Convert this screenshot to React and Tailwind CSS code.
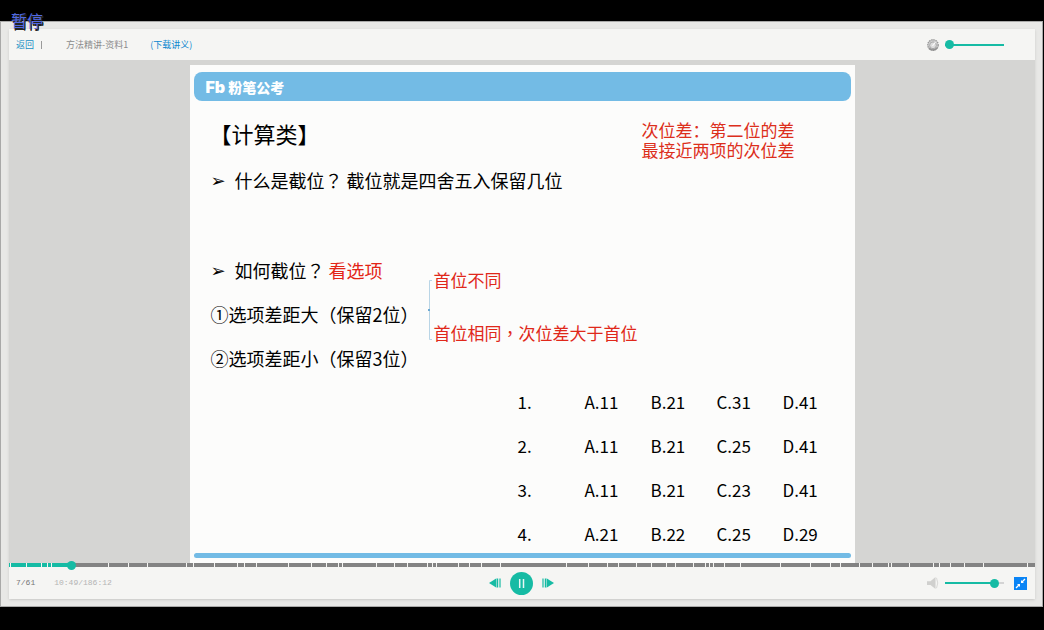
import React from "react";

const BAR_START = 9;
const BAR_END = 1035;
const PLAYED_TO = 72;
const MARKS = [
  11, 27, 42, 48, 52, 72, 109, 129, 148, 187, 194, 215, 238, 245, 257, 289, 312,
  327, 339, 343, 377, 395, 408, 428, 433, 437, 459, 470, 482, 501, 567, 588,
  607, 618, 636, 651, 666, 675, 693, 705, 709, 713, 724, 740, 780, 810, 830,
  840, 859, 872, 888, 891, 909, 933, 939, 950, 964, 983, 1027,
];

const QUESTIONS = [
  ["1.", "A.11", "B.21", "C.31", "D.41"],
  ["2.", "A.11", "B.21", "C.25", "D.41"],
  ["3.", "A.11", "B.21", "C.23", "D.41"],
  ["4.", "A.21", "B.22", "C.25", "D.29"],
];

const THUMB =
  "appearance-none rounded-none outline-none [&::-webkit-slider-thumb]:appearance-none [&::-webkit-slider-thumb]:h-[9px] [&::-webkit-slider-thumb]:w-[9px] [&::-webkit-slider-thumb]:rounded-full [&::-webkit-slider-thumb]:bg-[#16bba4]";

function Header() {
  return (
    <header className="flex h-[31px] items-center bg-[#f5f5f3] pr-[31px] pl-[7px] text-[9px] leading-4">
      <a href="#back" className="text-[#1a8fc4]">
        返回
      </a>
      <span className="ml-[7px] h-2 w-px bg-[#9a9a9a]" />
      <h1 className="ml-6 text-[#8c8c8c]">方法精讲-资料1</h1>
      <a href="#handout" className="ml-[22px] text-[#0c87cf]">
        (下载讲义)
      </a>
      <div className="ml-auto flex items-center gap-[6px]">
        <svg width="12" height="12" viewBox="0 0 12 12" aria-hidden="true">
          <circle cx="6" cy="6" r="5.2" fill="#d4d4d4" stroke="#999" strokeWidth="1.4" strokeDasharray="1.5 0.7" />
          <circle cx="6" cy="6.3" r="3.4" fill="#dcdcdc" stroke="#a8a8a8" />
          <path d="M5.5 7 8.5 3.2" stroke="#fafafa" strokeWidth="1.2" />
          <path d="M2 9A5 5 0 0 0 10 9" fill="none" stroke="#929292" strokeWidth="1.3" />
        </svg>
        <input
          type="range"
          aria-label="播放速度"
          defaultValue={0}
          className={`${THUMB} h-[9px] w-[59px] bg-[linear-gradient(#16bba4,#16bba4)] bg-[length:100%_2px] bg-center bg-no-repeat`}
        />
      </div>
    </header>
  );
}

/* Full-width punctuation, centred in its cell. */
function Mark({ children }) {
  return <span className="font-['Noto_Sans_CJK_TC',sans-serif]">{children}</span>;
}

function Bullet({ children }) {
  return (
    <li className="flex h-10 items-center pl-px">
      <span className="w-6 font-['DejaVu_Sans'] text-[18px]">➢</span>
      <span className="flex gap-1">{children}</span>
    </li>
  );
}

function Slide() {
  return (
    <article className="w-full max-w-[665px] bg-[#fcfcfb] px-1 pt-[7px] pb-[5px] text-black">
      <div className="flex h-[29px] items-center gap-[3px] rounded-lg bg-[#73bbe5] pl-3 text-white">
        <span className="font-['Inter'] text-[16px] leading-5 font-black">Fb</span>
        <span className="text-[14px] leading-5 font-black">粉笔公考</span>
      </div>

      <div className="mt-[11px] flex items-start justify-between pr-[56px] pl-4">
        <h2 className="text-[22px] leading-[42px]">【计算类】</h2>
        <p className="mt-2 text-[17px] leading-5 text-[#dc2f1c]">
          次位差：第二位的差
          <br />
          最接近两项的次位差
        </p>
      </div>

      <ul className="pl-4 text-[18px]">
        <Bullet>
          <span>
            什么是截位<Mark>？</Mark>
          </span>
          <span>截位就是四舍五入保留几位</span>
        </Bullet>
      </ul>

      <div className="mt-[50px] flex items-start pl-4">
        <ul className="flex w-[218px] flex-col gap-1 text-[18px] whitespace-nowrap">
          <Bullet>
            <span>
              如何截位<Mark>？</Mark>
            </span>
            <span className="text-[#e32416]">看选项</span>
          </Bullet>
          <li className="flex h-10 items-center pl-px">
            <span>
              ①选项差距大<Mark>（</Mark>保留2位<Mark>）</Mark>
            </span>
          </li>
          <li className="flex h-10 items-center pl-px">
            <span>
              ②选项差距小<Mark>（</Mark>保留3位<Mark>）</Mark>
            </span>
          </li>
        </ul>
        <svg className="mt-[30px]" width="5" height="60" viewBox="0 0 5 60" aria-hidden="true">
          <path d="M4 .5H1.5V59.5H4" fill="none" stroke="#b9d5e6" />
          <path d="M0 30H2" stroke="#6da9d2" strokeWidth="2" />
        </svg>
        <div className="mt-5 ml-px flex flex-col gap-[33px] text-[17px] leading-5 text-[#e0281a]">
          <p>首位不同</p>
          <p>
            首位相同<Mark>，</Mark>次位差大于首位
          </p>
        </div>
      </div>

      <table className="mt-3 ml-[324px] text-left text-[17px] leading-6">
        <tbody>
          {QUESTIONS.map(([number, ...choices]) => (
            <tr key={number} className="group">
              <th scope="row" className="w-[67px] p-0 pb-5 font-normal group-last:pb-0">
                {number}
              </th>
              {choices.map((choice) => (
                <td key={choice} className="w-[66px] p-0 pb-5 group-last:pb-0">
                  {choice}
                </td>
              ))}
            </tr>
          ))}
        </tbody>
      </table>
      <div className="mt-[7px] h-[5px] rounded-full bg-[#73bbe5]" />
    </article>
  );
}

function Timeline() {
  const edges = [BAR_START, ...MARKS, BAR_END];
  return (
    <div className="relative flex h-1 gap-px bg-[#f5f5f3]">
      {edges.slice(1).map((end, i) => (
        <span
          key={end}
          className={end <= PLAYED_TO ? "bg-[#16bba4]" : "bg-[#838383]"}
          style={{ flex: `${end - edges[i] - 1} 1 0%` }}
        />
      ))}
      <input
        type="range"
        aria-label="播放进度"
        max={1000}
        defaultValue={57}
        className={`${THUMB} absolute inset-x-0 -top-[2px] h-[9px] w-full bg-transparent`}
      />
    </div>
  );
}

function Controls() {
  return (
    <footer className="grid h-8 grid-cols-[1fr_auto_1fr] items-center bg-[#f5f5f3] pr-2 pl-[7px]">
      <div className="flex gap-[19px] font-['Liberation_Mono'] text-[8px] leading-4">
        <span className="text-[#777]">7/61</span>
        <span className="text-[#b4b4b4]">10:49/186:12</span>
      </div>
      <div className="flex items-center gap-[9px]">
        <button type="button" aria-label="上一页">
          <svg className="block" width="12" height="10" viewBox="0 0 12 10">
            <path d="M0 5 7.5 .3V9.7Z" fill="#16bba4" />
            <path d="M8.6 .5V9.5M11 .5V9.5" stroke="#16bba4" strokeWidth="1.2" />
          </svg>
        </button>
        <button type="button" aria-label="暂停">
          <svg className="block" width="23" height="23" viewBox="0 0 23 23">
            <circle cx="11.5" cy="11.5" r="11.5" fill="#16bba4" />
            <path d="M9.7 7V16M13.5 7V16" stroke="#e8f8f5" strokeWidth="1.5" />
          </svg>
        </button>
        <button type="button" aria-label="下一页">
          <svg className="block" width="12" height="10" viewBox="0 0 12 10">
            <path d="M12 5 4.5 .3V9.7Z" fill="#16bba4" />
            <path d="M1 .5V9.5M3.4 .5V9.5" stroke="#16bba4" strokeWidth="1.2" />
          </svg>
        </button>
      </div>
      <div className="flex items-center justify-end">
        <button type="button" aria-label="静音">
          <svg className="block" width="12" height="12" viewBox="0 0 12 12">
            <path d="M0 4.2H3.5L8.5 0V12L3.5 8H0Z" fill="#d0d0ce" />
            <path d="M9.5 .8Q12 6 9.5 11.2" fill="none" stroke="#d8d8d6" />
          </svg>
        </button>
        <input
          type="range"
          aria-label="音量"
          defaultValue={89}
          className={`${THUMB} ml-[6px] h-[9px] w-[59px] bg-[linear-gradient(to_right,#16bba4_84%,#d4d4d4_84%)] bg-[length:100%_2px] bg-center bg-no-repeat`}
        />
        <button type="button" aria-label="退出全屏" className="ml-[10px]">
          <svg className="block" width="13" height="13" viewBox="0 0 13 13">
            <path d="M0 0H13V13H0Z" fill="#0a84f5" />
            <path d="M7 3V6H10ZM6 10V7H3Z" fill="#fff" />
            <path d="M8 5 11 2M5 8 2 11" stroke="#fff" strokeWidth="1.3" />
          </svg>
        </button>
      </div>
    </footer>
  );
}

export default function App() {
  return (
    <div className="relative flex min-h-screen flex-col bg-black pt-[21px] pr-px pb-[23px] font-['Noto_Sans_CJK_SC',sans-serif]">
      <main className="flex flex-1 flex-col border border-[#a9a9a8] bg-[#e8e8e6] py-[7px] pr-[7px] pl-2">
        <div className="flex flex-1 flex-col shadow-sm">
          <Header />
          <section className="flex flex-1 justify-center bg-[#d5d5d3] pt-[5px]">
            <Slide />
          </section>
          <Timeline />
          <Controls />
        </div>
      </main>
      <p className="absolute top-[10px] left-[11px] text-[16px] leading-5 text-[#5068e0] [text-shadow:1px_1px_0_#222,1px_2px_0_#222]">
        暂停
      </p>
    </div>
  );
}
